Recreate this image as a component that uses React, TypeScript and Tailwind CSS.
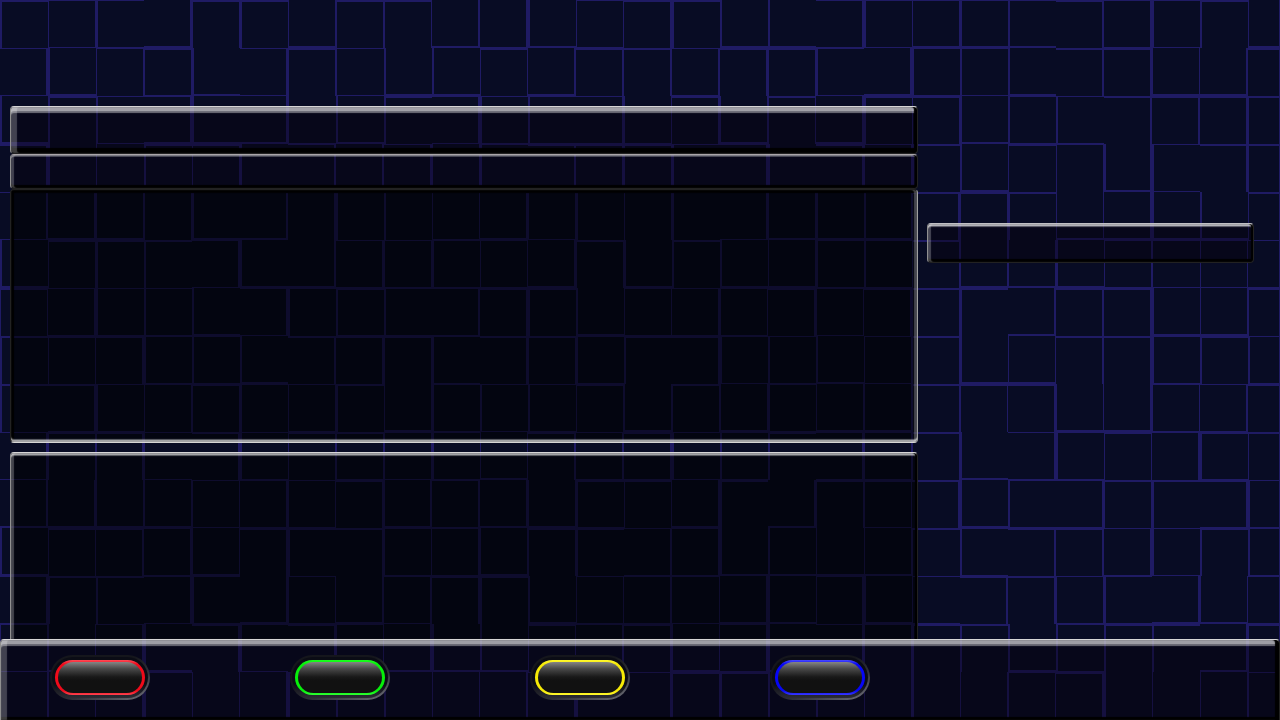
const CELL = 48;

// Seams between tiles. A digit d is floor(d / 3) pixels before the seam and d % 3 after it.
const VERTICAL = [
  '215075144368138220815206821',
  '081450742213666675082206736',
  '222080722082073743815220667',
  '081215066750675080752115807',
  '067450682137515075247513821',
  '215208067513752215214451413',
  '138220822068213737375066814',
  '213822067507520822145136822',
  '208145151522144451444373736',
  '074708144513668220745081381',
  '067443737667513807438207508',
  '213673807374506821142066822',
  '082080736682136381810675073',
  '143808073821367380752222207',
  '043813822136807522151438114',
];

const HORIZONTAL = [
  '211022022000122001111121120',
  '134801810656521884377625308',
  '381463038717105023853712882',
  '803886461345551708126540122',
  '111111111111111000128206302',
  '388276011473202367720067771',
  '811137754458071784528685335',
  '255473255422755413120622781',
  '221457120411502346328800415',
  '155121527435181757720178452',
  '300314153460553505526442251',
  '688735527468517060327551154',
  '722470104580144667615214304',
  '401357573008453761752045865',
  '366703216661018560000750061',
];

function seams() {
  let path = '';
  for (let row = 0; row < 15; row++) {
    for (let col = 0; col < 27; col++) {
      const x = col * CELL;
      const y = row * CELL;
      const v = Number(VERTICAL[row][col]);
      const h = Number(HORIZONTAL[row][col]);
      const left = Math.floor(v / 3);
      const up = Math.floor(h / 3);
      if (v) path += `M${x - left} ${y}h${left + (v % 3)}v${CELL}h${-left - (v % 3)}z`;
      if (h) path += `M${x} ${y - up}h${CELL}v${up + (h % 3)}h${-CELL}z`;
    }
  }
  return path + 'M1279 0h1v720h-1z';
}

const SEAMS = seams();

function TileBackground() {
  return (
    <svg
      className="absolute inset-0 h-full w-full"
      viewBox="0 0 1280 720"
      preserveAspectRatio="xMidYMid slice"
      shapeRendering="crispEdges"
      aria-hidden="true"
    >
      <path d={SEAMS} fill="#1f1b64" fillRule="nonzero" />
    </svg>
  );
}

const lamps = [
  { name: 'Red', ring: 'bg-[linear-gradient(#ff4c58,#f00a1a_12%,#f00a1a_88%,#ff4450)]' },
  { name: 'Green', ring: 'bg-[linear-gradient(#1cff20,#06f00a_12%,#06f00a_88%,#30ff34)]' },
  { name: 'Yellow', ring: 'bg-[linear-gradient(#fff830,#f6ea06_12%,#f6ea06_88%,#fff830)]' },
  { name: 'Blue', ring: 'bg-[linear-gradient(#4a4aff,#0606f6_12%,#0606f6_88%,#3a3aff)]' },
];

function LampButton({ name, ring }: { name: string; ring: string }) {
  return (
    <div className="w-60">
      <button
        type="button"
        aria-label={name}
        className="block h-[45px] w-[100px] rounded-full bg-[linear-gradient(160deg,#15161c_40%,#30313a_65%,#73747c)] p-0.5"
      >
        <span className="block h-full rounded-full bg-[linear-gradient(#0b0c15_65%,#2c2d35)] p-[3px]">
          <span className={`block h-full rounded-full px-[3px] py-0.5 ${ring}`}>
            <span className="block h-full rounded-full bg-[linear-gradient(#858585,#484848_22%,#191919_48%,#111_60%)]" />
          </span>
        </span>
      </button>
    </div>
  );
}

export default function App() {
  return (
    <div className="relative isolate flex min-h-screen flex-col overflow-hidden bg-[#080c24]">
      <TileBackground />
      <main className="relative grid flex-1 grid-cols-[minmax(0,908fr)_minmax(0,327fr)] gap-[9px] pt-[106px] pr-[26px] pl-2.5">
        <div className="flex flex-col">
          <header className="h-12 rounded border border-t-[#d6d6d6] border-r-[#222222] border-b-[#222222] border-l-[#909090] bg-[#04000a]/40 shadow-[inset_-3px_0_1px_#000,inset_0_4px_0_rgba(255,255,255,0.35),inset_0_6px_1px_rgba(255,255,255,0.42),inset_6px_0_1px_rgba(255,255,255,0.24),inset_0_-5px_1px_#000]" />
          <div className="h-[35px] rounded border border-t-[#aaa6aa] border-r-[#222222] border-b-[#222222] border-l-[#909090] bg-[#04000a]/40 shadow-[inset_-2px_0_1px_#000,inset_0_1px_0_rgba(255,255,255,0.35),inset_0_2px_0_rgba(255,255,255,0.25),inset_3px_0_1px_rgba(255,255,255,0.24),inset_0_-3px_1px_#000]" />
          <section className="h-[254px] rounded border border-t-[#222222] border-r-[#a0a0a0] border-b-[#d6d6d6] border-l-[#222222] bg-black/55 shadow-[inset_0_-2px_0_rgba(255,255,255,0.4),inset_0_-3px_1px_rgba(255,255,255,0.38),inset_-3px_0_1px_rgba(255,255,255,0.26),inset_3px_0_1px_#000,inset_0_3px_1px_#000]" />
          <section className="mt-[9px] flex-1 rounded-t border border-b-0 border-t-[#d6d6d6] border-r-[#222222] border-l-[#909090] bg-black/55 shadow-[inset_-2px_0_1px_#000,inset_0_2px_0_rgba(255,255,255,0.4),inset_0_3px_1px_rgba(255,255,255,0.38),inset_3px_0_1px_rgba(255,255,255,0.26)]" />
        </div>
        <aside className="mt-[117px] h-10 rounded border border-t-[#c0c0c4] border-r-[#222222] border-b-[#222222] border-l-[#909090] bg-[#04000a]/40 shadow-[inset_-2px_0_1px_#000,inset_0_2px_0_rgba(255,255,255,0.5),inset_0_3px_1px_rgba(255,255,255,0.38),inset_3px_0_1px_rgba(255,255,255,0.26),inset_0_-3px_1px_#000]" />
      </main>
      <footer className="relative flex h-[81px] rounded-t border border-b-0 border-t-[#d6d6d6] border-r-[#222222] border-l-[#909090] bg-[#04000a]/40 pt-[15px] pl-[49px] shadow-[inset_-4px_0_1px_#000,inset_0_4px_0_rgba(255,255,255,0.35),inset_0_6px_1px_rgba(255,255,255,0.4),inset_6px_0_1px_rgba(255,255,255,0.24),inset_0_-3px_1px_#000]">
        {lamps.map((lamp) => (
          <LampButton key={lamp.name} name={lamp.name} ring={lamp.ring} />
        ))}
      </footer>
    </div>
  );
}
